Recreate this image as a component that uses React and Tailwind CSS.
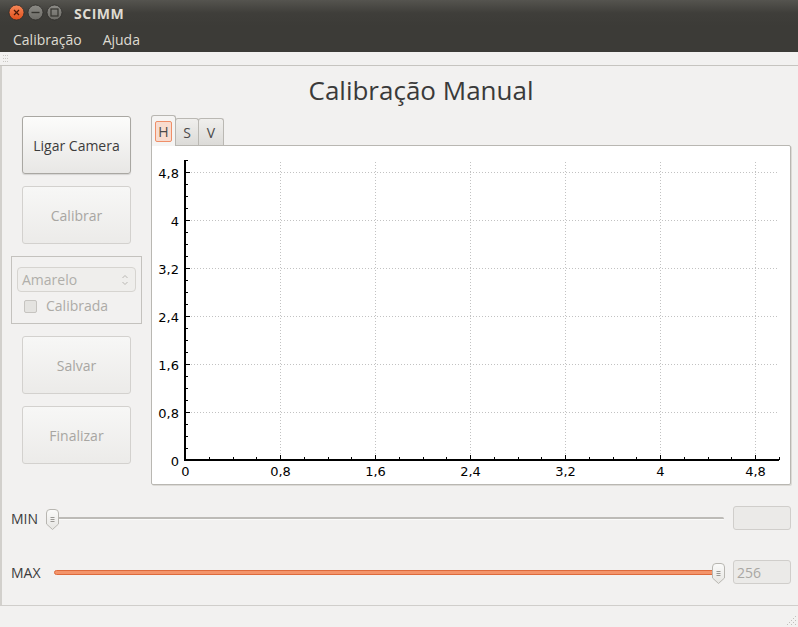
import React from "react";

const XS = 118.75;
const YS = 60;
const X0 = 33;
const Y0 = 314;

function Chart() {
  const majors = [0, 0.8, 1.6, 2.4, 3.2, 4, 4.8];
  const labels = ["0", "0,8", "1,6", "2,4", "3,2", "4", "4,8"];
  const minors = [];
  for (let i = 0; i <= 25; i++) minors.push(i * 0.2);
  const px = (v) => Math.round(X0 + v * XS) + 0.5;
  const py = (v) => Math.round(Y0 - v * YS) + 0.5;
  return (
    <svg width="638" height="338" className="block">
      {majors.slice(1).map((v) => (
        <line key={"hg" + v} x1={X0} x2={625} y1={py(v)} y2={py(v)} stroke="#c2c2c2" strokeWidth="1" strokeDasharray="1 2" />
      ))}
      {majors.slice(1).map((v) => (
        <line key={"vg" + v} x1={px(v)} x2={px(v)} y1={16} y2={Y0} stroke="#c2c2c2" strokeWidth="1" strokeDasharray="1 2" />
      ))}
      {minors.map((v, i) => {
        const major = i % 4 === 0;
        return (
          <g key={"t" + i}>
            <line x1={px(v)} x2={px(v)} y1={Y0 - (major ? 5 : 3)} y2={Y0} stroke="#000" strokeWidth="1" />
            <line x1={X0} x2={X0 + (major ? 5 : 3)} y1={py(v)} y2={py(v)} stroke="#000" strokeWidth="1" />
          </g>
        );
      })}
      <line x1={X0} x2={X0} y1={14} y2={Y0 + 1} stroke="#000" strokeWidth="2" />
      <line x1={X0 - 1} x2={627} y1={Y0} y2={Y0} stroke="#000" strokeWidth="2" />
      {majors.map((v, i) => (
        <text key={"yl" + i} x={27} y={py(v) + 5} textAnchor="end" fontSize="13" fill="#000" fontFamily="'DejaVu Sans', sans-serif">
          {labels[i]}
        </text>
      ))}
      {majors.map((v, i) => (
        <text key={"xl" + i} x={px(v)} y={330} textAnchor="middle" fontSize="13" fill="#000" fontFamily="'DejaVu Sans', sans-serif">
          {labels[i]}
        </text>
      ))}
    </svg>
  );
}

function Btn({ children, enabled }) {
  return (
    <div
      className={
        enabled
          ? "w-[109px] h-[58px] rounded-[3px] border border-[#a9a7a2] text-[#3c3c3c] bg-linear-to-b from-[#fcfcfb] to-[#e8e7e5] shadow-[0_1px_1px_rgba(0,0,0,0.12)] flex items-center justify-center text-[14px]"
          : "w-[109px] h-[58px] rounded-[3px] border border-[#d3d1ce] text-[#a8a6a2] bg-linear-to-b from-[#f7f7f6] to-[#ecebe9] flex items-center justify-center text-[14px]"
      }
    >
      {children}
    </div>
  );
}

function Handle() {
  return (
    <svg width="13" height="21" viewBox="0 0 13 21">
      <defs>
        <linearGradient id="hg" x1="0" y1="0" x2="0" y2="1">
          <stop offset="0" stopColor="#fbfbfa" />
          <stop offset="1" stopColor="#e6e5e2" />
        </linearGradient>
      </defs>
      <path d="M0.5 4 Q0.5 0.5 4 0.5 L9 0.5 Q12.5 0.5 12.5 4 L12.5 15 L6.5 20.5 L0.5 15 Z" fill="url(#hg)" stroke="#b8b6b1" strokeWidth="1" />
      <line x1="4.5" x2="8.5" y1="8.5" y2="8.5" stroke="#9a9894" strokeWidth="1" />
      <line x1="4.5" x2="8.5" y1="10.5" y2="10.5" stroke="#9a9894" strokeWidth="1" />
      <line x1="4.5" x2="8.5" y1="12.5" y2="12.5" stroke="#9a9894" strokeWidth="1" />
    </svg>
  );
}

export default function App() {
  return (
    <div className="w-[798px] h-[627px] bg-[#f2f1f0] flex flex-col overflow-hidden font-['Open_Sans',sans-serif]">
      {/* Title bar */}
      <div className="h-[26px] bg-linear-to-b from-[#55544f] via-[#3f3e3a] to-[#3c3b37] flex items-center">
        <svg width="70" height="26" className="block shrink-0">
          <defs>
            <linearGradient id="cl" x1="0" y1="0" x2="0" y2="1">
              <stop offset="0" stopColor="#f7895a" />
              <stop offset="1" stopColor="#df4e1a" />
            </linearGradient>
            <linearGradient id="gr" x1="0" y1="0" x2="0" y2="1">
              <stop offset="0" stopColor="#8d8c87" />
              <stop offset="1" stopColor="#6b6a65" />
            </linearGradient>
          </defs>
          <circle cx="16.5" cy="12.5" r="7.5" fill="url(#cl)" stroke="#2d2c29" strokeWidth="0.8" />
          <line x1="14" y1="10" x2="19" y2="15" stroke="#4a1807" strokeWidth="1.2" />
          <line x1="19" y1="10" x2="14" y2="15" stroke="#4a1807" strokeWidth="1.2" />
          <circle cx="35.5" cy="12.5" r="7.5" fill="url(#gr)" stroke="#2d2c29" strokeWidth="0.8" />
          <line x1="31.5" y1="12.5" x2="39.5" y2="12.5" stroke="#35342f" strokeWidth="1.4" />
          <circle cx="54.5" cy="12.5" r="7.5" fill="url(#gr)" stroke="#2d2c29" strokeWidth="0.8" />
          <rect x="51" y="9" width="7" height="7" fill="none" stroke="#35342f" strokeWidth="1.2" />
        </svg>
        <span className="ml-[4px] text-[14px] font-bold text-[#dfdbd2] tracking-[0.5px]">SCIMM</span>
      </div>

      {/* Menu bar */}
      <div className="h-[26px] bg-[#3c3b37] flex items-center pl-[13px] gap-[21px] text-[14px] text-[#dfdbd2]">
        <span>Calibração</span>
        <span>Ajuda</span>
      </div>

      {/* Toolbar strip */}
      <div className="h-[14px] border-b border-[#c6c4c0] flex items-center pl-[3px]">
        <svg width="6" height="10" className="block">
          <line x1="0" x2="6" y1="1.5" y2="1.5" stroke="#c9c7c3" strokeDasharray="1 1" />
          <line x1="0" x2="6" y1="4.5" y2="4.5" stroke="#c9c7c3" strokeDasharray="1 1" />
          <line x1="0" x2="6" y1="7.5" y2="7.5" stroke="#c9c7c3" strokeDasharray="1 1" />
        </svg>
      </div>

      {/* Main content */}
      <div className="flex-1 flex flex-col border-l-2 border-[#d2d0cc]">
        <div className="h-[48px] flex items-center justify-center pl-[42px] text-[26px] text-[#3a3a3a]">
          Calibração Manual
        </div>

        <div className="mt-[1px] h-[370px] flex items-start pl-[9px]">
          {/* Left column */}
          <div className="w-[131px] flex flex-col items-center gap-[12px] pt-[1px]">
            <Btn enabled>Ligar Camera</Btn>
            <Btn>Calibrar</Btn>
            <div className="w-[131px] h-[68px] border border-[#c4c2be] flex flex-col px-[5px] pt-[10px]">
              <div className="h-[25px] rounded-[4px] border border-[#d6d4d0] bg-[#efeeec] flex items-center justify-between pl-[4px] pr-[7px] text-[14px] text-[#b0aeaa]">
                <span>Amarelo</span>
                <svg width="6" height="14" className="block">
                  <path d="M0.5 5 L3 2.5 L5.5 5" fill="none" stroke="#b8b6b2" strokeWidth="1" />
                  <path d="M0.5 9 L3 11.5 L5.5 9" fill="none" stroke="#b8b6b2" strokeWidth="1" />
                </svg>
              </div>
              <div className="mt-[7px] flex items-center pl-[7px]">
                <div className="w-[13px] h-[13px] rounded-[2px] border border-[#c6c4c0] bg-[#e4e3e0]" />
                <span className="ml-[9px] text-[14px] text-[#adaba7] leading-[14px]">Calibrada</span>
              </div>
            </div>
            <Btn>Salvar</Btn>
            <Btn>Finalizar</Btn>
          </div>

          {/* Tab widget */}
          <div className="ml-[9px] w-[640px] flex flex-col">
            <div className="h-[30px] flex items-end">
              <div className="w-[25px] h-[31px] -mb-[1px] z-10 rounded-t-[3px] border border-b-0 border-[#b8b6b1] bg-[#f5f4f3] flex items-start justify-center pt-[5px]">
                <div className="w-[17px] h-[21px] rounded-[2px] border border-[#ef8e68] bg-[#f8dccf] flex items-center justify-center text-[14px] text-[#4a4a4a]">
                  H
                </div>
              </div>
              <div className="w-[24px] h-[27px] -ml-[1px] rounded-t-[3px] border border-b-0 border-[#bab8b3] bg-linear-to-b from-[#f0efed] to-[#dcdbd8] flex items-center justify-center text-[14px] text-[#4a4a4a]">
                S
              </div>
              <div className="w-[26px] h-[27px] -ml-[1px] rounded-t-[3px] border border-b-0 border-[#bab8b3] bg-linear-to-b from-[#f0efed] to-[#dcdbd8] flex items-center justify-center text-[14px] text-[#4a4a4a]">
                V
              </div>
            </div>
            <div className="h-[340px] bg-white border border-[#b9b7b2] rounded-b-[2px] rounded-tr-[2px] shadow-[1px_1px_0_#dcdad6]">
              <Chart />
            </div>
          </div>
        </div>

        {/* Sliders */}
        <div className="mt-[21px] h-[24px] flex items-center pl-[9px] pr-[7px]">
          <span className="w-[41px] text-[14px] text-[#3c3c3c]">MIN</span>
          <div className="flex-1 h-[24px] relative flex items-center">
            <div className="w-full h-[3px] rounded-full border-t-2 border-[#bdbbb7] bg-[#fbfbfa]" />
            <div className="absolute left-[-6px] top-[3px]">
              <Handle />
            </div>
          </div>
          <div className="ml-[9px] w-[58px] h-[24px] rounded-[3px] border border-[#d0cecb] bg-[#ebeae8]" />
        </div>
        <div className="mt-[30px] h-[24px] flex items-center pl-[9px] pr-[7px]">
          <span className="w-[41px] text-[14px] text-[#3c3c3c]">MAX</span>
          <div className="flex-1 h-[24px] relative flex items-center">
            <div className="ml-[2px] w-[662px] h-[5px] rounded-l-full border border-[#dd6a3c] bg-[#f4946a]" />
            <div className="absolute left-[660px] top-[3px]">
              <Handle />
            </div>
          </div>
          <div className="ml-[9px] w-[58px] h-[24px] rounded-[3px] border border-[#d0cecb] bg-[#ebeae8] flex items-center pl-[3px] text-[14px] text-[#a9a7a3]">
            256
          </div>
        </div>
        <div className="flex-1" />
      </div>

      {/* Status bar */}
      <div className="h-[22px] border-t border-[#d0cecb] flex items-end justify-end">
        <svg width="12" height="12" className="block mr-[1px] mb-[1px]">
          {[[10, 2], [10, 6], [10, 10], [6, 6], [6, 10], [2, 10], [8, 4], [8, 8], [4, 8]].map(([x, y], i) => (
            <rect key={i} x={x} y={y} width="1" height="1" fill="#c2c0bc" />
          ))}
        </svg>
      </div>
    </div>
  );
}
